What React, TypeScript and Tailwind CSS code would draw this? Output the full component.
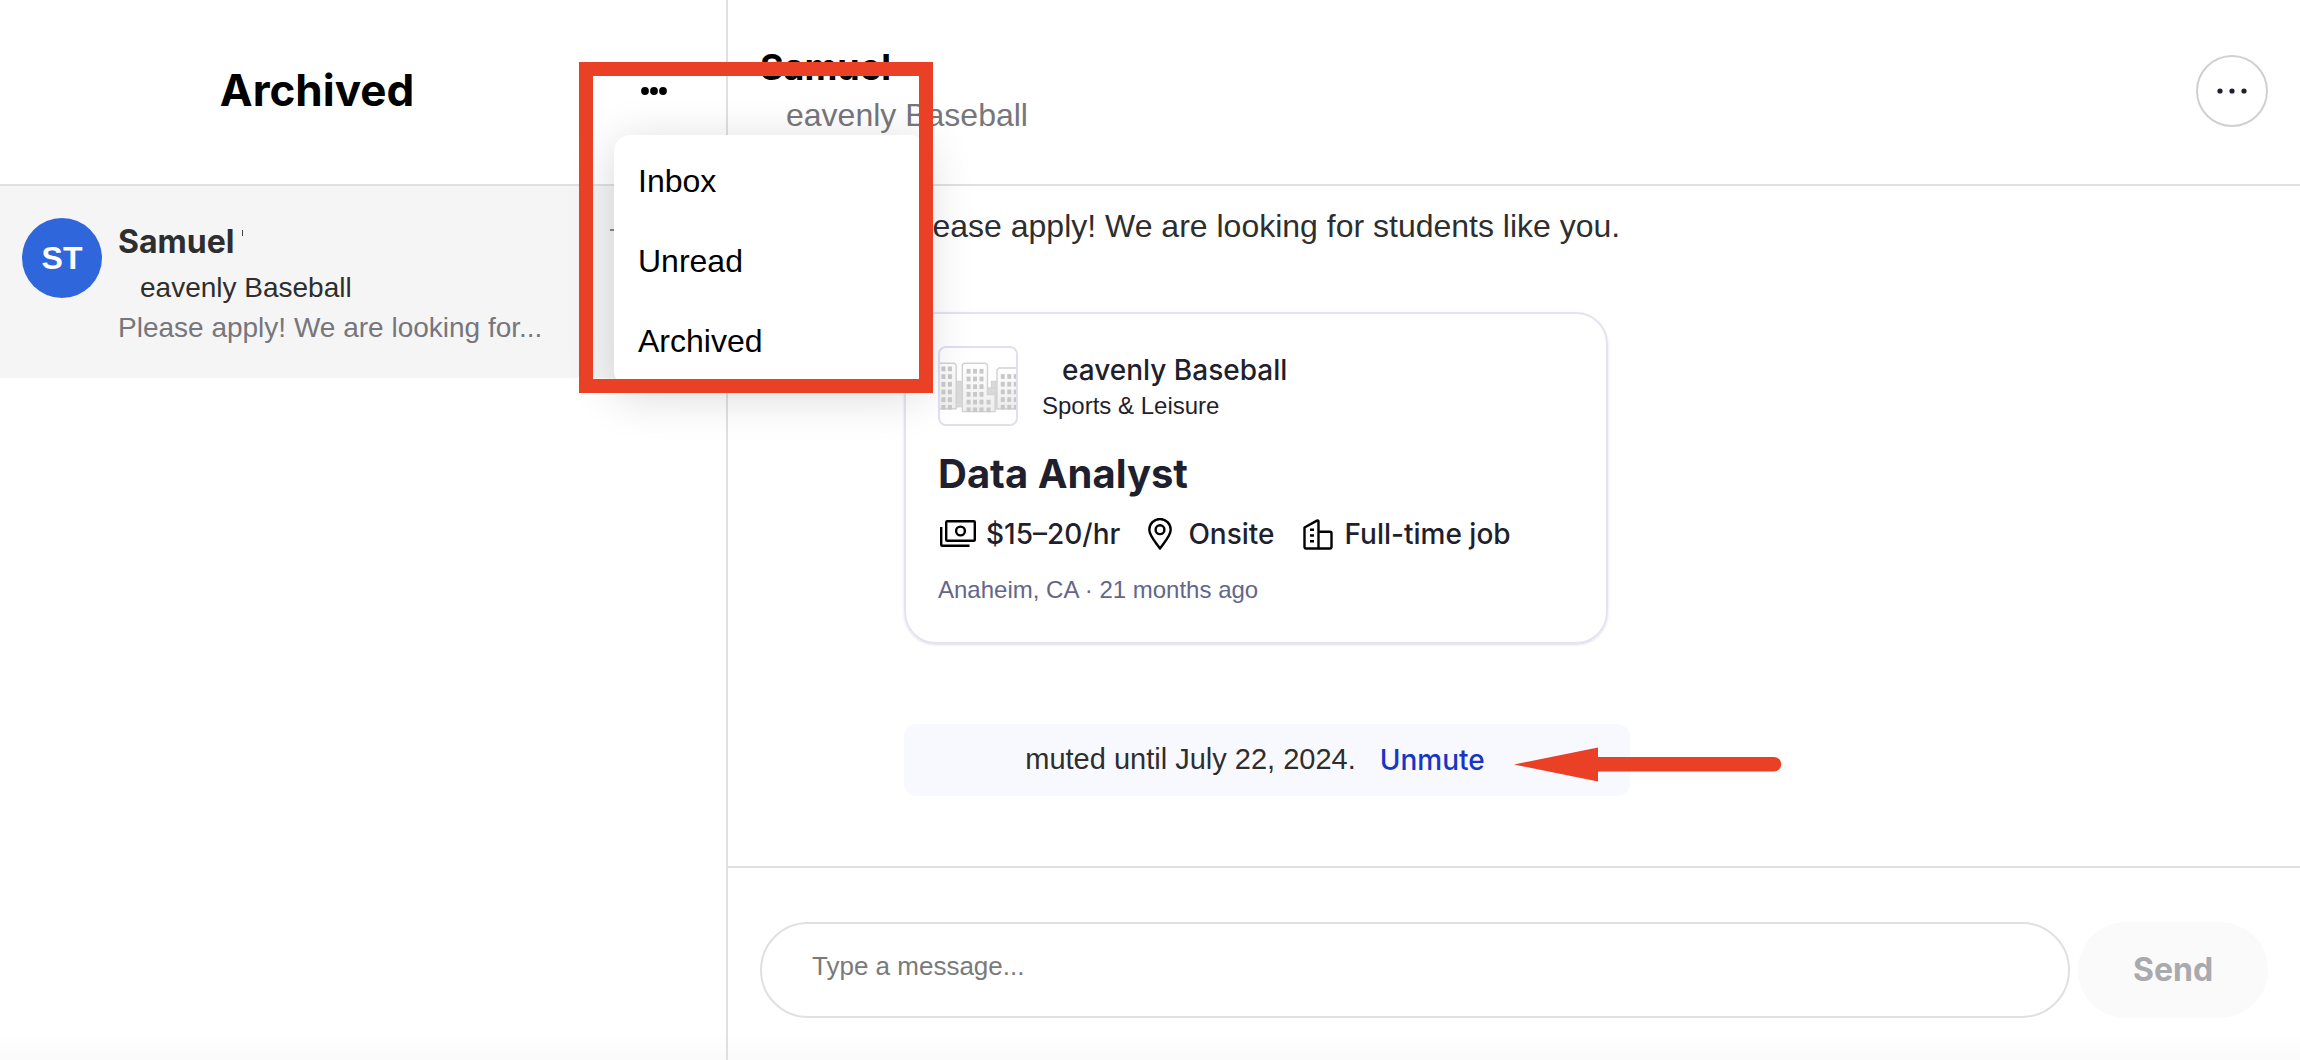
import { useState } from 'react';

const filters = ['Inbox', 'Unread', 'Archived'];

const conversations = [
  { id: 1, initials: 'ST', name: 'Samuel', company: 'eavenly Baseball', preview: 'Please apply! We are looking for...' },
];

const job = {
  company: 'eavenly Baseball',
  industry: 'Sports & Leisure',
  title: 'Data Analyst',
  location: 'Anaheim, CA · 21 months ago',
};

function CashIcon() {
  return (
    <svg width="36" height="28" viewBox="0 0 36 28" fill="none" stroke="#000" strokeWidth="2.4" strokeLinejoin="round">
      <rect x="6.2" y="1.2" width="28.6" height="19.6" rx="1" />
      <circle cx="20.5" cy="11" r="4.4" />
      <path d="M1.2 7v17.8a1 1 0 0 0 1 1H29.5" />
    </svg>
  );
}

function PinIcon() {
  return (
    <svg width="24" height="32" viewBox="0 0 24 32" fill="none" stroke="#000" strokeWidth="2.4" strokeLinejoin="round">
      <path d="M12 30.5C7 23.5 1.3 17.5 1.3 11.7a10.7 10.7 0 0 1 21.4 0C22.7 17.5 17 23.5 12 30.5z" />
      <circle cx="12" cy="11.7" r="4.4" />
    </svg>
  );
}

function OfficeIcon() {
  return (
    <svg width="30" height="31" viewBox="0 0 30 31" fill="none" stroke="#000" strokeWidth="2.4" strokeLinejoin="round">
      <path d="M15.5 29.5H3a1.5 1.5 0 0 1-1.5-1.5V8.5L14 1.6a1 1 0 0 1 1.5.9z" />
      <path d="M15.5 12.8H27a1.5 1.5 0 0 1 1.5 1.5V28a1.5 1.5 0 0 1-1.5 1.5H15.5" />
      <path d="M7 10.8h4M7 16.5h4M7 22.2h4" />
    </svg>
  );
}

// Window grid for one tower of the placeholder logo
function Windows({ x, y, cols, rows }: { x: number; y: number; cols: number; rows: number }) {
  const cells = [];
  for (let r = 0; r < rows; r++) {
    for (let c = 0; c < cols; c++) {
      cells.push(<rect key={`${r}-${c}`} x={x + c * 6.8} y={y + r * 8.1} width="4.2" height="5" />);
    }
  }
  return <g fill="#c8c8c8">{cells}</g>;
}

function CompanyLogo() {
  return (
    <svg className="block w-full" viewBox="0 0 80 80">
      <defs>
        <linearGradient id="tower" x1="0" y1="0" x2="0" y2="1">
          <stop offset="0" stopColor="#ffffff" />
          <stop offset="1" stopColor="#ededed" />
        </linearGradient>
      </defs>
      <g fill="#d9d9d9" stroke="#cfcfcf">
        <rect x="17" y="35" width="7" height="27" />
        <rect x="54" y="35" width="5" height="9" />
        <rect x="50" y="42" width="12" height="22" />
      </g>
      <g fill="url(#tower)" stroke="#d2d2d2" strokeWidth="1.5">
        <path d="M-2 16H15l2 2V64H-2z" />
        <path d="M82 21H62l-2 2V64H82z" />
        <path d="M23.5 17.5l2-1.5H48l2 2V49h8V67H23.5z" />
      </g>
      <Windows x={1.5} y={19.5} cols={2} rows={6} />
      <Windows x={28} y={22} cols={3} rows={6} />
      <Windows x={49} y={54.5} cols={1} rows={2} />
      <Windows x={64} y={27.5} cols={3} rows={5} />
    </svg>
  );
}

export default function App() {
  const [activeFilter, setActiveFilter] = useState('Archived');
  const [message, setMessage] = useState('');
  const [muted, setMuted] = useState(true);

  return (
    <main className="relative flex h-screen min-h-[900px] bg-linear-to-b from-white from-97% to-[#fbfbfb] font-['Liberation_Sans',Arial,sans-serif] text-black">
      {/* Conversation list */}
      <aside className="w-[728px] shrink-0 border-r-2 border-[#e0e0e0]">
        <header className="flex h-[186px] items-center border-b-2 border-[#e0e0e0] pr-13 pb-0.5">
          <h1 className="flex-1 pb-0.5 text-center font-['Inter',sans-serif] text-[44px] leading-12 font-bold">{activeFilter}</h1>
          <div className="relative">
            <button aria-label="Filter conversations" className="flex h-10 w-10 items-center justify-center">
              <svg width="26" height="8" viewBox="0 0 26 8">
                <circle cx="4" cy="4" r="3.9" />
                <circle cx="13" cy="4" r="3.9" />
                <circle cx="22" cy="4" r="3.9" />
              </svg>
            </button>
            <ul className="absolute top-16 -left-5 z-10 w-[312px] rounded-2xl bg-white py-1.5 shadow-[0_8px_48px_rgba(0,0,0,0.16)]">
              {filters.map((name) => (
                <li key={name}>
                  <button onClick={() => setActiveFilter(name)} className="h-20 w-full px-6 text-left text-[32px]">
                    {name}
                  </button>
                </li>
              ))}
            </ul>
          </div>
        </header>

        {conversations.map((c) => (
          <a key={c.id} href="#" className="flex h-48 gap-4 bg-[#f5f5f5] px-[22px] pt-8">
            <span className="flex h-20 w-20 shrink-0 items-center justify-center rounded-full bg-[#3066db] text-[32px] font-bold text-white">
              {c.initials}
            </span>
            <div className="min-w-0 flex-1">
              <div className="flex justify-between pr-[90px]">
                <p className="flex font-['Inter',sans-serif] text-[32px] leading-12 font-bold text-[#2e2e2e]">
                  {c.name}
                  <span className="mt-3 ml-2 h-1.5 w-px bg-[#444]" />
                </p>
                <span className="mt-[11px] h-0.5 w-1 bg-[#888]" />
              </div>
              <p className="pl-[22px] text-[28px] leading-11 text-[#2e2e2e]">{c.company}</p>
              <p className="truncate text-[28px] leading-9 text-[#76767c]">{c.preview}</p>
            </div>
          </a>
        ))}
      </aside>

      {/* Open conversation */}
      <section className="flex min-w-0 flex-1 flex-col">
        <header className="flex h-[186px] shrink-0 items-center justify-between border-b-2 border-[#e0e0e0] px-8 pb-0.5">
          <div>
            <h2 className="font-['Inter',sans-serif] text-[36px] leading-12 font-bold">{conversations[0].name}</h2>
            <p className="pl-[26px] text-[32px] leading-12 text-[#76767c]">{conversations[0].company}</p>
          </div>
          <button aria-label="Conversation options" className="flex h-18 w-18 items-center justify-center rounded-full border-2 border-[#d0d0d0]">
            <svg width="30" height="6" viewBox="0 0 30 6" fill="#1f1f2e">
              <circle cx="3" cy="3" r="2.6" />
              <circle cx="15" cy="3" r="2.6" />
              <circle cx="27" cy="3" r="2.6" />
            </svg>
          </button>
        </header>

        <div className="flex-1 pt-4 pl-44">
          <p className="text-[32px] leading-12 text-[#2e2e2e]">Please apply! We are looking for students like you.</p>

          <article className="mt-[62px] w-[704px] rounded-[32px] border-2 border-[#e3e4f3] p-8 text-[#1f1f2e] shadow-sm">
            <div className="flex items-center gap-6">
              <div className="h-20 w-20 overflow-hidden rounded-lg border-2 border-[#e0dff2]">
                <CompanyLogo />
              </div>
              <div>
                <p className="pl-5 font-['Inter',sans-serif] text-[28px] leading-10 font-medium">{job.company}</p>
                <p className="text-2xl">{job.industry}</p>
              </div>
            </div>
            <h3 className="mt-6 font-['Inter',sans-serif] text-[40px] leading-12 font-bold">{job.title}</h3>
            <ul className="mt-4 flex h-10 items-center gap-7 pl-0.5 font-['Inter',sans-serif] text-[28px] font-medium">
              <li className="flex items-center gap-2.5"><CashIcon />$15–20/hr</li>
              <li className="flex items-center gap-4"><PinIcon />Onsite</li>
              <li className="flex items-center gap-3"><OfficeIcon />Full-time job</li>
            </ul>
            <p className="mt-5 mb-1 text-2xl text-[#63668a]">{job.location}</p>
          </article>

          {muted && (
            <div className="mt-20 flex h-18 w-[726px] items-center justify-center gap-6 rounded-xl bg-[#f8f9ff] pr-6 text-[29px] text-[#2e2e2e]">
              <span>muted until July 22, 2024.</span>
              <button onClick={() => setMuted(false)} className="font-['Inter',sans-serif] text-[28px] font-medium text-[#1736c4]">Unmute</button>
            </div>
          )}
        </div>

        <form className="flex items-start gap-2 border-t-2 border-[#e0e0e0] px-8 pt-[54px] pb-[42px]" onSubmit={(e) => e.preventDefault()}>
          <input
            aria-label="Message"
            placeholder="Type a message..."
            value={message}
            onChange={(e) => setMessage(e.target.value)}
            className="h-24 min-w-0 flex-1 rounded-full border-2 border-[#e0e0e0] bg-white px-[50px] pb-2 text-[26px] outline-none placeholder:text-[#7a7a7a]"
          />
          <button disabled={!message} className="h-24 w-[190px] rounded-full bg-[#fafafa] font-['Inter',sans-serif] text-[32px] font-bold text-[#a9a9ae]">
            Send
          </button>
        </form>
      </section>

      {/* Callouts */}
      <div className="pointer-events-none absolute top-[62px] left-[579px] z-20 h-[331px] w-[354px] border-[14px] border-[#ea4126]" />
      <svg className="pointer-events-none absolute top-[746px] left-[1514px] z-20" width="268" height="36" viewBox="0 0 268 36" fill="#ea4126">
        <path d="M0 18.5L84 1.5V11H260a7 7 0 0 1 0 14.5H84V35.5z" />
      </svg>
    </main>
  );
}
